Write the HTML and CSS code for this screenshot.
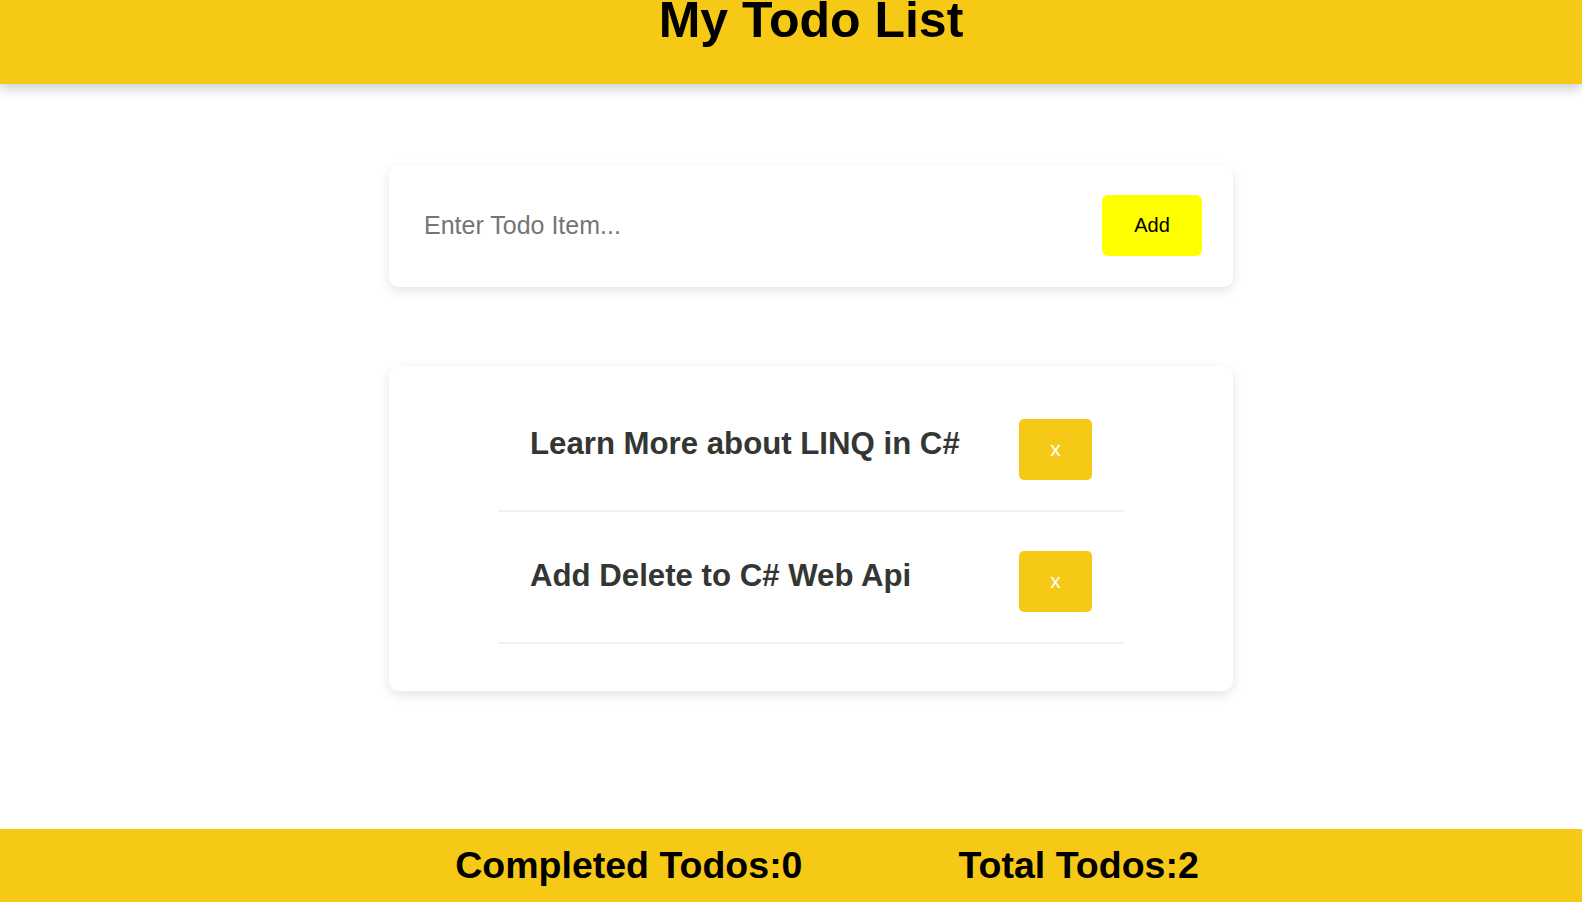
FILE: index.html
```html
<!DOCTYPE html>
<html lang="en">
<head>
<meta charset="utf-8">
<title>My Todo List</title>
<link rel="stylesheet" href="styles.css">
</head>
<body>
<header class="app-header">
  <h1 class="app-title">My Todo List</h1>
</header>
<main class="app-main">
  <form class="card add-card">
    <input class="todo-input" type="text" placeholder="Enter Todo Item...">
    <button class="add-btn" type="button">Add</button>
  </form>
  <section class="card list-card">
    <ul class="todo-list">
      <li class="todo-item">
        <span class="todo-text">Learn More about LINQ in C#</span>
        <button class="del-btn" type="button">x</button>
      </li>
      <li class="todo-item">
        <span class="todo-text">Add Delete to C# Web Api</span>
        <button class="del-btn" type="button">x</button>
      </li>
    </ul>
  </section>
</main>
<footer class="app-footer">
  <span class="stat">Completed Todos:0</span>
  <span class="stat">Total Todos:2</span>
</footer>
</body>
</html>
```

FILE: styles.css
```css
* { box-sizing: border-box; }

html, body { height: 100%; }

body {
  margin: 0;
  font-family: "Liberation Sans", Arial, sans-serif;
  background: #ffffff;
  display: flex;
  flex-direction: column;
  min-height: 100vh;
  overflow: hidden;
}

.app-header {
  height: 84px;
  background: #f6c917;
  box-shadow: 0 4px 12px rgba(0, 0, 0, 0.22);
  padding-left: 40px;
  overflow: hidden;
  flex-shrink: 0;
  position: relative;
  z-index: 1;
}

.app-title {
  margin: -5px 0 0;
  font-size: 50px;
  line-height: 50px;
  font-weight: 700;
  color: #000;
  text-align: center;
}

.app-main {
  padding-left: 40px;
  padding-top: 80.5px;
}

.card {
  width: 844px;
  margin: 0 auto;
  background: #fff;
  border-radius: 10px;
  box-shadow: 0 4px 12px rgba(0, 0, 0, 0.11);
}

.add-card {
  display: flex;
  align-items: center;
  padding: 30px 31px 31px 30px;
}

.todo-input {
  flex: 1;
  border: none;
  outline: none;
  background: transparent;
  font-family: "Liberation Sans", Arial, sans-serif;
  font-size: 25px;
  padding: 0 0 0 5px;
  color: #333;
}

.todo-input::placeholder { color: #757575; }

.add-btn {
  width: 100px;
  height: 61px;
  border: none;
  border-radius: 6px;
  background: #ffff00;
  color: #000;
  font-family: "Liberation Sans", Arial, sans-serif;
  font-size: 20px;
  padding: 0;
}

.list-card {
  margin-top: 79.5px;
  padding: 14px 0 47px;
}

.todo-list {
  list-style: none;
  margin: 0 auto;
  padding: 0;
  width: 626px;
}

.todo-item {
  display: flex;
  justify-content: space-between;
  align-items: flex-start;
  padding: 38.5px 32px 30.5px 32px;
  border-bottom: 2px solid #f0f0f0;
}

.todo-text {
  padding-top: 7.5px;
  font-size: 31.2px;
  font-weight: 700;
  color: #333633;
}

.del-btn {
  width: 73px;
  height: 61px;
  border: none;
  border-radius: 5px;
  background: #f6c917;
  color: #fff;
  font-family: "Liberation Sans", Arial, sans-serif;
  font-size: 21px;
  padding: 0;
}

.app-footer {
  margin-top: auto;
  height: 73px;
  flex-shrink: 0;
  background: #f6c917;
  display: flex;
  justify-content: center;
  align-items: center;
  gap: 156px;
  padding-left: 72px;
}

.stat {
  font-size: 37.5px;
  font-weight: 700;
  color: #000;
}
```
